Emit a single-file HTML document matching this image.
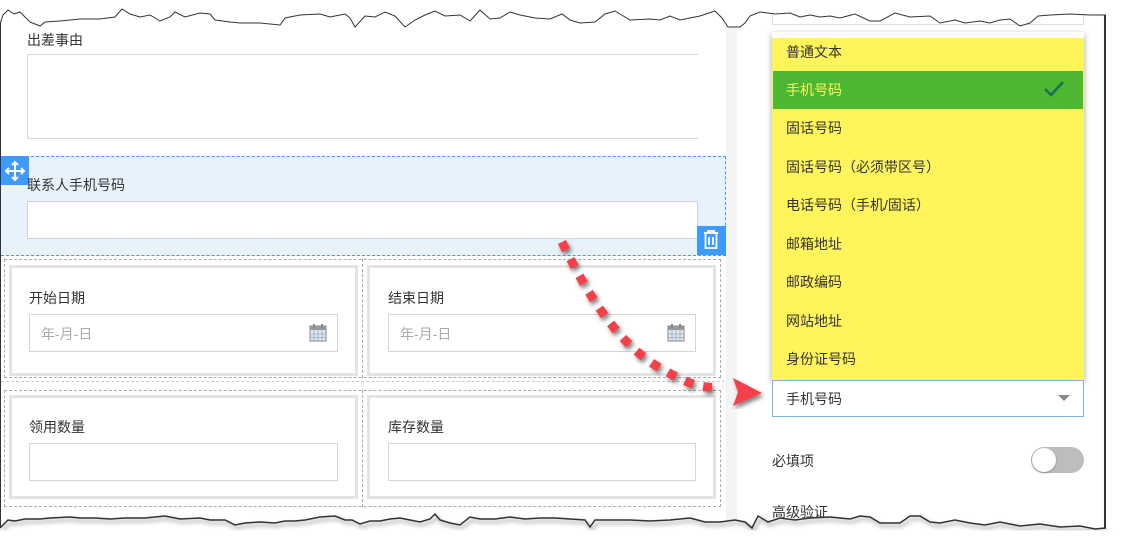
<!DOCTYPE html>
<html><head><meta charset="utf-8"><style>
*{margin:0;padding:0;box-sizing:border-box}
body{width:1122px;height:557px;background:#fff;position:relative;overflow:hidden;font-family:"Liberation Sans","Noto Sans CJK SC",sans-serif;font-size:14px;color:#333}
.a{position:absolute}
.lbl{position:absolute;font-size:14px;color:#333;line-height:16px}
.inp{position:absolute;border:1px solid #d4d4de;background:#fff}
.cell{position:absolute;border:3px solid #e4e4e4;background:#fff}
.dash{position:absolute;border:1px dashed #aaa}
.item{position:absolute;left:786px;font-size:14px;color:#333;line-height:16px}
</style></head><body>
<div class="a" style="left:0;top:0;width:1105px;height:535px;background:#fff;border-left:1px solid #333"></div>
<div class="a" style="left:726px;top:0;width:11px;height:535px;background:#f4f4f4"></div>
<div class="a" style="left:1104px;top:10px;width:2px;height:520px;background:#333;box-shadow:3px 0 5px rgba(0,0,0,.5)"></div>

<div class="lbl" style="left:27px;top:32px">出差事由</div>
<div class="inp" style="left:27px;top:54px;width:671px;height:85px;border-right:none"></div>

<div class="a" style="left:1px;top:156px;width:725px;height:100px;background:#e8f2fc;border-top:1px dashed #3d9aff;border-bottom:1px dashed #3d9aff;border-right:1px dashed #3d9aff"></div>
<div class="a" style="left:1px;top:156px;width:28px;height:29px;background:#3d9aff"></div>
<svg class="a" style="left:4px;top:160px" width="22" height="22" viewBox="0 0 22 22" fill="none" stroke="#fff" stroke-width="2"><path d="M11 2v18M2 11h18"/><path d="M8 5l3-3 3 3M8 17l3 3 3-3M5 8l-3 3 3 3M17 8l3 3-3 3"/></svg>
<div class="lbl" style="left:27px;top:177px">联系人手机号码</div>
<div class="inp" style="left:27px;top:201px;width:671px;height:38px"></div>
<div class="a" style="left:697px;top:226px;width:29px;height:29px;background:#3d9aff"></div>
<svg class="a" style="left:700px;top:229px" width="22" height="22" viewBox="0 0 22 22" fill="none" stroke="#fff" stroke-width="1.8"><path d="M4 4h14M8 4V2h6v2M5.5 4v15h11V4M9 8v8M13 8v8"/></svg>

<div class="dash" style="left:4px;top:259px;width:717px;height:119px"></div>
<div class="dash" style="left:362px;top:259px;width:0;height:119px;border-width:0 0 0 1px"></div>
<div class="cell" style="left:9px;top:265px;width:349px;height:111px"></div>
<div class="cell" style="left:367px;top:265px;width:349px;height:111px"></div>
<div class="lbl" style="left:29px;top:290px">开始日期</div>
<div class="lbl" style="left:388px;top:290px">结束日期</div>
<div class="inp" style="left:29px;top:314px;width:309px;height:38px"></div>
<div class="inp" style="left:388px;top:314px;width:308px;height:38px"></div>
<div class="lbl" style="left:41px;top:326px;color:#aaa">年-月-日</div>
<div class="lbl" style="left:400px;top:326px;color:#aaa">年-月-日</div>
<svg class="a" style="left:309px;top:323px" width="18" height="19" viewBox="0 0 18 19"><rect x="1" y="3" width="16" height="15" fill="#dfe8f2" stroke="#999" stroke-width="1.2"/><rect x="1" y="3" width="16" height="4" fill="#999"/><path d="M5 1v4M13 1v4" stroke="#888" stroke-width="2"/><path d="M1 11h16M1 14.5h16M5 7v11M9 7v11M13 7v11" stroke="#9ab" stroke-width=".8"/></svg>
<svg class="a" style="left:667px;top:323px" width="18" height="19" viewBox="0 0 18 19"><rect x="1" y="3" width="16" height="15" fill="#dfe8f2" stroke="#999" stroke-width="1.2"/><rect x="1" y="3" width="16" height="4" fill="#999"/><path d="M5 1v4M13 1v4" stroke="#888" stroke-width="2"/><path d="M1 11h16M1 14.5h16M5 7v11M9 7v11M13 7v11" stroke="#9ab" stroke-width=".8"/></svg>

<div class="dash" style="left:1px;top:381px;width:724px;height:0;border-width:1px 0 0 0;border-color:#ccc"></div>
<div class="dash" style="left:4px;top:390px;width:717px;height:117px"></div>
<div class="dash" style="left:362px;top:390px;width:0;height:117px;border-width:0 0 0 1px"></div>
<div class="cell" style="left:9px;top:395px;width:349px;height:104px"></div>
<div class="cell" style="left:367px;top:395px;width:349px;height:104px"></div>
<div class="lbl" style="left:29px;top:419px">领用数量</div>
<div class="lbl" style="left:388px;top:419px">库存数量</div>
<div class="inp" style="left:29px;top:443px;width:309px;height:38px"></div>
<div class="inp" style="left:388px;top:443px;width:308px;height:38px"></div>

<div class="inp" style="left:772px;top:0;width:312px;height:25px;border-color:#ddd"></div>
<div class="a" style="left:772px;top:32px;width:312px;height:348px;background:#fff45a;box-shadow:0 2px 6px rgba(0,0,0,.35);border-top:6px solid #fff"></div>
<div class="a" style="left:773px;top:71px;width:310px;height:38px;background:#4cb733"></div>
<div class="item" style="top:44px">普通文本</div>
<div class="item" style="top:82px;color:#fff45a">手机号码</div>
<svg class="a" style="left:1043px;top:80px" width="22" height="18" viewBox="0 0 22 18" fill="none" stroke="#1f6e5c" stroke-width="2.6"><path d="M2 9l6 6L20 2"/></svg>
<div class="item" style="top:120px">固话号码</div>
<div class="item" style="top:159px">固话号码（必须带区号）</div>
<div class="item" style="top:197px">电话号码（手机/固话）</div>
<div class="item" style="top:236px">邮箱地址</div>
<div class="item" style="top:274px">邮政编码</div>
<div class="item" style="top:313px">网站地址</div>
<div class="item" style="top:351px">身份证号码</div>

<div class="inp" style="left:772px;top:380px;width:312px;height:37px;border-color:#7fb3e0"></div>
<div class="item" style="top:391px">手机号码</div>
<div class="a" style="left:1058px;top:395px;width:0;height:0;border-left:6px solid transparent;border-right:6px solid transparent;border-top:6px solid #888"></div>
<div class="lbl" style="left:772px;top:453px">必填项</div>
<div class="a" style="left:1031px;top:447px;width:53px;height:26px;border-radius:13px;background:#bdbdbd"></div>
<div class="a" style="left:1032px;top:448px;width:24px;height:24px;border-radius:12px;background:#fff;box-shadow:0 1px 2px rgba(0,0,0,.3)"></div>
<div class="lbl" style="left:772px;top:504px">高级验证</div>

<svg class="a" style="left:0;top:0" width="1122" height="557" viewBox="0 0 1122 557">
<defs><filter id="s"><feDropShadow dx="2" dy="3" stdDeviation="2" flood-color="#000" flood-opacity=".5"/></filter></defs>
<path d="M562 242 C590 300 620 345 660 368 S705 386 722 388" fill="none" stroke="#f44048" stroke-width="9" stroke-dasharray="9 10" filter="url(#s)"/>
<polygon points="733,378 762,393 733,406 738,392" fill="#f44048" filter="url(#s)"/>
<path d="M0 0H1122V557H0Z M0 24 L3 15 L8 10 L14 14 L20 12 L24 16 L30 22 L40 26 L45 22 L60 21 L80 19 L100 19 L115 17 L122 9 L130 14 L140 17 L150 15 L160 21 L170 17 L175 12 L185 17 L200 13 L210 14 L215 20 L230 22 L240 23 L260 23 L280 25 L285 18 L300 15 L320 14 L330 17 L345 14 L350 18 L355 27 L365 16 L375 17 L385 12 L395 16 L405 27 L415 20 L425 15 L435 11 L445 16 L460 15 L470 21 L480 10 L490 19 L500 18 L510 12 L520 15 L535 18 L550 19 L562 14 L570 20 L580 23 L595 22 L605 14 L615 11 L630 20 L650 19 L660 20 L670 16 L680 20 L700 16 L715 11 L722 18 L728 27 L740 27 L745 23 L750 16 L760 12 L775 14 L790 13 L800 17 L810 15 L820 17 L830 16 L840 18 L855 14 L870 21 L880 21 L895 13 L910 17 L930 16 L940 23 L955 20 L965 23 L980 21 L990 23 L1000 20 L1010 19 L1020 26 L1030 23 L1038 16 L1050 15 L1070 14 L1090 15 L1106 15 L1106 528 L1095 529 L1080 526 L1060 527 L1040 524 L1020 526 L1000 522 L985 525 L970 523 L955 520 L940 523 L930 522 L920 516 L910 516 L900 523 L880 523 L870 517 L860 516 L850 519 L830 517 L810 518 L795 520 L780 518 L768 522 L758 516 L752 528 L745 522 L735 520 L720 522 L705 522 L690 518 L670 520 L650 521 L630 520 L610 520 L595 520 L590 527 L585 520 L570 519 L555 518 L540 518 L525 519 L510 517 L495 519 L480 519 L470 517 L460 525 L450 523 L440 520 L435 514 L430 519 L420 522 L410 520 L400 518 L390 519 L380 521 L370 521 L360 524 L352 520 L345 520 L335 516 L320 517 L305 520 L295 521 L285 521 L275 523 L260 522 L245 523 L235 525 L225 520 L210 520 L200 518 L180 519 L165 516 L145 518 L125 518 L110 519 L95 518 L80 518 L70 517 L50 518 L40 519 L25 519 L15 521 L8 520 L3 525 L0 528 Z" fill="#fff" fill-rule="evenodd"/>
<path d="M0 24 L3 15 L8 10 L14 14 L20 12 L24 16 L30 22 L40 26 L45 22 L60 21 L80 19 L100 19 L115 17 L122 9 L130 14 L140 17 L150 15 L160 21 L170 17 L175 12 L185 17 L200 13 L210 14 L215 20 L230 22 L240 23 L260 23 L280 25 L285 18 L300 15 L320 14 L330 17 L345 14 L350 18 L355 27 L365 16 L375 17 L385 12 L395 16 L405 27 L415 20 L425 15 L435 11 L445 16 L460 15 L470 21 L480 10 L490 19 L500 18 L510 12 L520 15 L535 18 L550 19 L562 14 L570 20 L580 23 L595 22 L605 14 L615 11 L630 20 L650 19 L660 20 L670 16 L680 20 L700 16 L715 11 L722 18 L728 27 L740 27 L745 23 L750 16 L760 12 L775 14 L790 13 L800 17 L810 15 L820 17 L830 16 L840 18 L855 14 L870 21 L880 21 L895 13 L910 17 L930 16 L940 23 L955 20 L965 23 L980 21 L990 23 L1000 20 L1010 19 L1020 26 L1030 23 L1038 16 L1050 15 L1070 14 L1090 15 L1106 15" fill="none" stroke="#333" stroke-width="1"/>
<path d="M1106 528 L1095 529 L1080 526 L1060 527 L1040 524 L1020 526 L1000 522 L985 525 L970 523 L955 520 L940 523 L930 522 L920 516 L910 516 L900 523 L880 523 L870 517 L860 516 L850 519 L830 517 L810 518 L795 520 L780 518 L768 522 L758 516 L752 528 L745 522 L735 520 L720 522 L705 522 L690 518 L670 520 L650 521 L630 520 L610 520 L595 520 L590 527 L585 520 L570 519 L555 518 L540 518 L525 519 L510 517 L495 519 L480 519 L470 517 L460 525 L450 523 L440 520 L435 514 L430 519 L420 522 L410 520 L400 518 L390 519 L380 521 L370 521 L360 524 L352 520 L345 520 L335 516 L320 517 L305 520 L295 521 L285 521 L275 523 L260 522 L245 523 L235 525 L225 520 L210 520 L200 518 L180 519 L165 516 L145 518 L125 518 L110 519 L95 518 L80 518 L70 517 L50 518 L40 519 L25 519 L15 521 L8 520 L3 525 L0 528" fill="none" stroke="#333" stroke-width="1.5" filter="url(#s)"/>
</svg>
</body></html>
